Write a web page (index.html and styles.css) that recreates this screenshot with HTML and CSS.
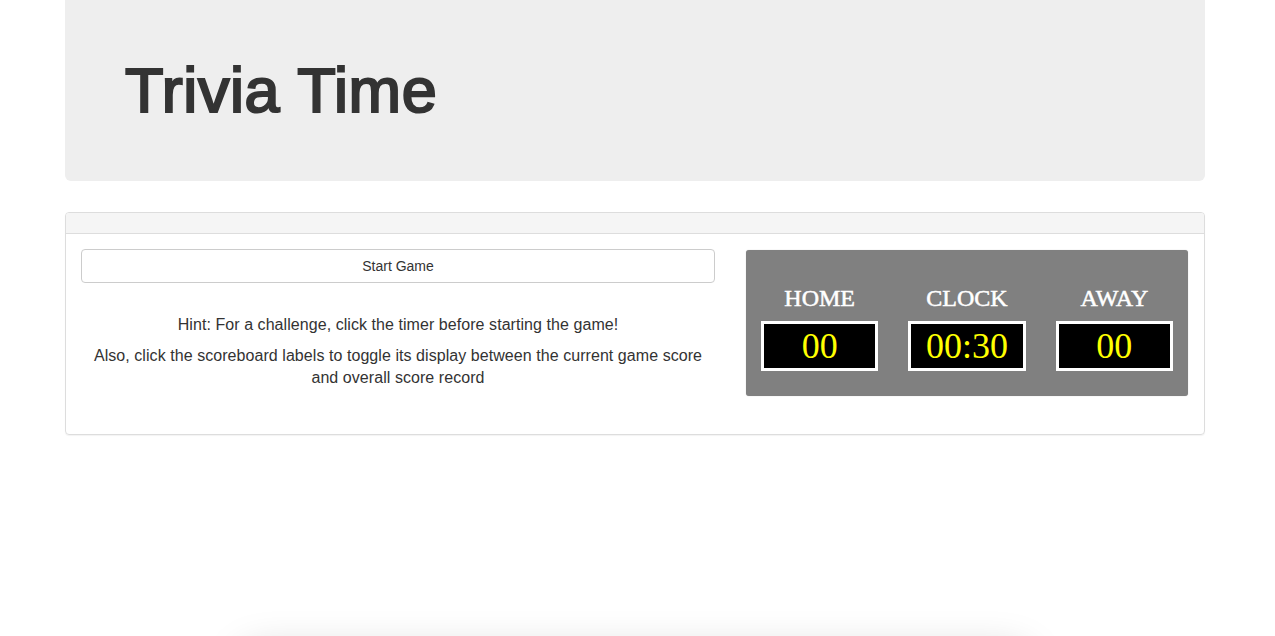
FILE: index.html
```html
<!DOCTYPE html>
<html>
<head>
<meta charset="utf-8">
<title>Trivia Time</title>
<link rel="stylesheet" href="styles.css">
</head>
<body>
<div class="container">
  <div class="jumbotron">
    <h1>Trivia Time</h1>
  </div>
  <div class="panel">
    <div class="panel-heading"></div>
    <div class="panel-body">
      <div class="left-col">
        <button class="btn">Start Game</button>
        <div class="hints">
          <p>Hint: For a challenge, click the timer before starting the game!</p>
          <p>Also, click the scoreboard labels to toggle its display between the current game score and overall score record</p>
        </div>
      </div>
      <div class="right-col">
        <div class="scoreboard">
          <div class="score-col">
            <div class="label">HOME</div>
            <div class="digits">00</div>
          </div>
          <div class="score-col">
            <div class="label">CLOCK</div>
            <div class="digits">00:30</div>
          </div>
          <div class="score-col">
            <div class="label">AWAY</div>
            <div class="digits">00</div>
          </div>
        </div>
      </div>
    </div>
  </div>
</div>
<div class="bottom-shadow"></div>
</body>
</html>
```

FILE: styles.css
```css
html, body {
  margin: 0;
  padding: 0;
  background: #fff;
}
body {
  font-family: "Liberation Sans", Arial, sans-serif;
  font-size: 14px;
  color: #333;
  padding-right: 5px;
  overflow: hidden;
  height: 636px;
}
.container {
  width: 1140px;
  margin: 0 auto;
}
.jumbotron {
  background: #eee;
  border-radius: 0 0 6px 6px;
  padding: 56px 60px 56px;
  margin-bottom: 31px;
}
.jumbotron h1 {
  margin: 0;
  font-size: 63px;
  line-height: 69px;
  font-weight: normal;
  color: #333;
  -webkit-text-stroke: 2.2px #333;
  letter-spacing: 0.6px;
}
.panel {
  border: 1px solid #ddd;
  border-radius: 4px;
  box-shadow: 0 1px 1px rgba(0,0,0,0.05);
}
.panel-heading {
  height: 20px;
  background: #f5f5f5;
  border-bottom: 1px solid #ddd;
  border-radius: 3px 3px 0 0;
}
.panel-body {
  padding: 15px;
  display: flex;
  gap: 31px;
}
.left-col {
  width: 634px;
}
.right-col {
  width: 442px;
}
.btn {
  display: block;
  width: 100%;
  height: 34px;
  background: #fff;
  border: 1px solid #ccc;
  border-radius: 4px;
  font-family: "Liberation Sans", Arial, sans-serif;
  font-size: 14px;
  color: #333;
  padding: 0;
}
.hints {
  margin-top: 31px;
  text-align: center;
  font-size: 16px;
  line-height: 22px;
  letter-spacing: 0.06px;
}
.hints p {
  margin: 0 0 9px;
}
.scoreboard {
  margin-top: 1px;
  margin-bottom: 23px;
  background: #808080;
  border-radius: 3px;
  box-shadow: 0 0 1px rgba(0,0,0,0.3);
  height: 146px;
  box-sizing: border-box;
  padding: 33px 0 0;
  display: flex;
}
.score-col {
  flex: 1;
  padding: 0 15px;
  text-align: center;
}
.label {
  font-family: "Liberation Serif", "Times New Roman", serif;
  font-size: 24px;
  line-height: 30px;
  color: #fff;
  -webkit-text-stroke: 0.5px #fff;
  margin-bottom: 8px;
}
.digits {
  height: 50px;
  box-sizing: border-box;
  border: 3px solid #fff;
  background: #000;
  color: #ff0;
  font-family: "Liberation Serif", "Times New Roman", serif;
  font-size: 36px;
  line-height: 44px;
}
.bottom-shadow {
  position: fixed;
  left: 240px;
  width: 790px;
  top: 650px;
  height: 100px;
  border-radius: 20px;
  box-shadow: 0 0 40px rgba(0,0,0,0.18);
}
```
